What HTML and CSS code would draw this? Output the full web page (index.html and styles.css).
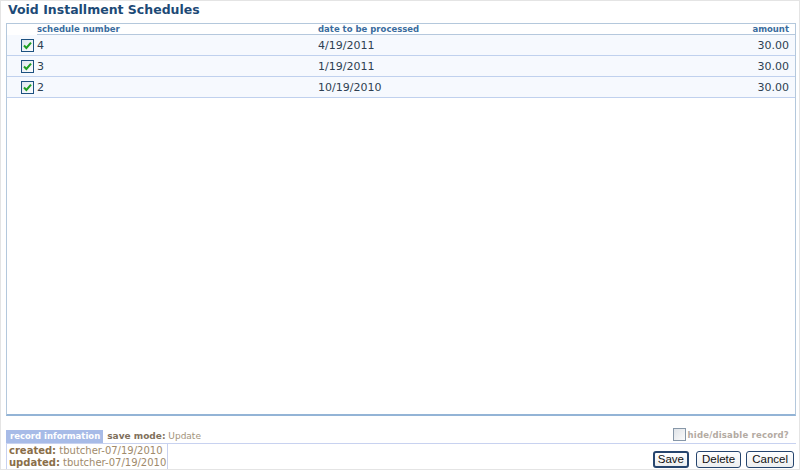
FILE: index.html
```html
<!DOCTYPE html>
<html lang="en">
<head>
  <meta charset="UTF-8" />
  <title>Void Installment Schedules</title>
  <link rel="stylesheet" href="styles.css">
</head>
<body>
  <div class="page">
    <h1 class="title">Void Installment Schedules</h1>

    <div class="grid">
      <table class="schedules">
        <thead>
          <tr>
            <th class="chk"></th>
            <th class="num">schedule number</th>
            <th class="date">date to be processed</th>
            <th class="amount">amount</th>
          </tr>
        </thead>
        <tbody>
          <tr>
            <td class="chk"><span class="box checked"><svg viewBox="0 0 13 13" width="13" height="13"><path d="M3 6.5 L5.4 9 L10 3.6" fill="none" stroke="#1e9e22" stroke-width="2"/></svg></span></td>
            <td>4</td>
            <td>4/19/2011</td>
            <td class="amount">30.00</td>
          </tr>
          <tr>
            <td class="chk"><span class="box checked"><svg viewBox="0 0 13 13" width="13" height="13"><path d="M3 6.5 L5.4 9 L10 3.6" fill="none" stroke="#1e9e22" stroke-width="2"/></svg></span></td>
            <td>3</td>
            <td>1/19/2011</td>
            <td class="amount">30.00</td>
          </tr>
          <tr>
            <td class="chk"><span class="box checked"><svg viewBox="0 0 13 13" width="13" height="13"><path d="M3 6.5 L5.4 9 L10 3.6" fill="none" stroke="#1e9e22" stroke-width="2"/></svg></span></td>
            <td>2</td>
            <td>10/19/2010</td>
            <td class="amount">30.00</td>
          </tr>
        </tbody>
      </table>
    </div>

    <div class="footer">
      <div class="footer-top">
        <span class="tab">record information</span>
        <span class="save-mode"><b>save mode:</b> Update</span>
        <label class="hide-record"><span class="box"></span>hide/disable record?</label>
      </div>
      <div class="footer-bottom">
        <div class="record-info">
          <div><b>created:</b> tbutcher-07/19/2010</div>
          <div><b>updated:</b> tbutcher-07/19/2010</div>
        </div>
        <div class="buttons">
          <button class="default">Save</button>
          <button>Delete</button>
          <button>Cancel</button>
        </div>
      </div>
    </div>
  </div>
</body>
</html>
```

FILE: styles.css
```css
* { box-sizing: border-box; }
html, body {
  margin: 0; padding: 0;
  font-family: "DejaVu Sans", Verdana, sans-serif;
  background: #fff;
}
.page {
  width: 800px; height: 470px;
  border: 1px solid #e4e4e4;
  padding: 0 3px 0 5px;
  display: flex; flex-direction: column;
  overflow: hidden;
}
.title {
  margin: 0; height: 22px;
  padding: 1px 0 0 2px;
  font-size: 12.5px; line-height: 16px;
  color: #1d4a76;
}
.grid {
  height: 395px;
  border: 1px solid #b4c8dc;
  border-bottom: 2px solid #93b4d6;
  background: #fff;
}
.schedules { width: 100%; border-collapse: collapse; }
.schedules th {
  font-size: 8.5px; line-height: 10px; height: 11px;
  color: #3a6c9e; text-align: left; padding: 0;
  border-bottom: 1px solid #b5c8dd;
  vertical-align: bottom;
}
.schedules th.chk { border-bottom: none; }
.schedules th.amount { text-align: right; padding-right: 6px; }
.schedules td {
  font-size: 11px; height: 21px; padding: 0;
  color: #2e3f52;
  background: #f6f9fe;
  border-bottom: 1px solid #c0d1ee;
}
.schedules .chk { width: 30px; text-align: right; padding-right: 3px; }
.schedules th.num, .schedules td:nth-child(2) { width: 281px; }
.schedules td.amount { text-align: right; padding-right: 6px; }
.schedules td.chk { line-height: 0; }

.box {
  display: inline-block; width: 13px; height: 13px;
  border: 1px solid #8797a8;
  background: linear-gradient(135deg, #dfe3e8, #fbfbfb);
  vertical-align: middle;
}
.box.checked {
  border-color: #1c5180;
  background: linear-gradient(135deg, #dde6ee, #fdfdfd);
}
.box svg { display: block; margin: -1px; }

.footer { margin-top: 14px; }
.footer-top {
  display: flex; align-items: flex-end;
  border-bottom: 1px solid #c8d2f0;
  height: 14px;
}
.tab {
  background: #a7bbe7; color: #fff;
  font-size: 8.5px; font-weight: bold; line-height: 13px;
  padding: 0 3px 0 4px;
}
.save-mode {
  font-size: 9px; line-height: 13px;
  color: #a3937c; margin-left: 4px;
}
.save-mode b { color: #7f705c; }
.hide-record {
  margin-left: auto; margin-right: 7px; margin-bottom: 2px;
  display: flex; align-items: center;
  font-size: 8.5px; font-weight: bold; letter-spacing: 0.2px;
  color: #b3aaa2;
}
.hide-record .box { margin-right: 2px; }

.footer-bottom { display: flex; align-items: flex-end; }
.record-info {
  width: 162px; height: 25px;
  border-left: 1px solid #c8d2f0; border-right: 1px solid #c8d2f0;
  padding: 1px 0 0 2px;
  font-size: 10px; line-height: 12px;
  white-space: nowrap;
  color: #a08a6b;
}
.record-info b { color: #8a6e48; }
.buttons { margin-left: auto; margin-right: 2px; margin-bottom: 1px; display: flex; gap: 5px; }
.buttons button {
  font-family: "Liberation Sans", Arial, sans-serif;
  font-size: 11.5px; height: 17px; line-height: 13px;
  padding: 0 5px;
  color: #111;
  background: linear-gradient(#ffffff, #eceef0);
  border: 1px solid #26456e; border-radius: 3px;
}
.buttons button.default { border-width: 2px; padding: 0 3px; margin-right: 2px; }
```
